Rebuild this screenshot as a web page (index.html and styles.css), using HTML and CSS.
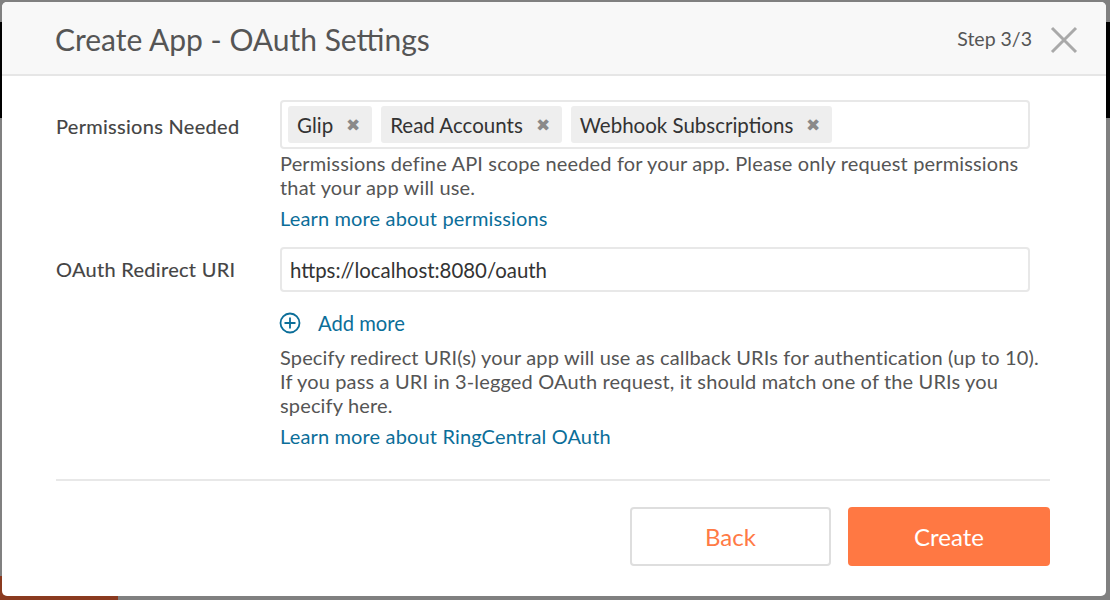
FILE: index.html
```html
<!DOCTYPE html>
<html>
<head>
<meta charset="utf-8">
<link rel="stylesheet" href="styles.css">
</head>
<body>
<div class="underlay">
  <div class="underlay-band"></div>
  <div class="underlay-spacer"></div>
  <div class="underlay-corner"></div>
</div>
<div class="modal">
  <div class="modal-header">
    <h1 class="modal-title">Create App - OAuth Settings</h1>
    <span class="step">Step 3/3</span>
    <svg class="close" width="28" height="28" viewBox="0 0 28 28"><path d="M2 2 L26 26 M26 2 L2 26" stroke="#a9a9a9" stroke-width="3" fill="none"/></svg>
  </div>
  <div class="modal-body">
    <div class="form-row">
      <label class="form-label">Permissions Needed</label>
      <div class="form-field">
        <div class="tag-input">
          <span class="tag">Glip <span class="tag-x">&#x2716;</span></span>
          <span class="tag">Read Accounts <span class="tag-x">&#x2716;</span></span>
          <span class="tag">Webhook Subscriptions <span class="tag-x">&#x2716;</span></span>
        </div>
        <p class="help">Permissions define API scope needed for your app. Please only request permissions that your app will use.</p>
        <a class="learn" href="#">Learn more about permissions</a>
      </div>
    </div>
    <div class="form-row row-uri">
      <label class="form-label label-uri">OAuth Redirect URI</label>
      <div class="form-field">
        <div class="text-input">https://localhost:8080/oauth</div>
        <div class="add-more">
          <svg width="22" height="22" viewBox="0 0 22 22"><circle cx="11" cy="11" r="9.5" stroke="#0b6e99" stroke-width="1.8" fill="none"/><path d="M11 5.5 V16.5 M5.5 11 H16.5" stroke="#0b6e99" stroke-width="1.8"/></svg>
          <span>Add more</span>
        </div>
        <p class="help help-uri">Specify redirect URI(s) your app will use as callback URIs for authentication (up to 10). If you pass a URI in 3-legged OAuth request, it should match one of the URIs you specify here.</p>
        <a class="learn" href="#">Learn more about RingCentral OAuth</a>
      </div>
    </div>
  </div>
  <div class="modal-footer">
    <button class="btn btn-back">Back</button>
    <button class="btn btn-create">Create</button>
  </div>
</div>
</body>
</html>
```
FILE: styles.css
```css
html, body {
  margin: 0;
  padding: 0;
}
body {
  width: 1110px;
  height: 600px;
  background: #808080;
  font-family: Lato, "Open Sans", sans-serif;
  overflow: hidden;
  position: relative;
}
.underlay {
  display: flex;
  flex-direction: column;
  height: 600px;
}
.underlay-band {
  margin-top: 22px;
  height: 96px;
  background: #000;
}
.underlay-spacer {
  flex: 1;
}
.underlay-corner {
  width: 118px;
  height: 24px;
  background: #8a3a1f;
}
.modal {
  position: absolute;
  left: 2px;
  top: 2px;
  width: 1104px;
  height: 594px;
  background: #fff;
  border-radius: 5px;
  overflow: hidden;
  display: flex;
  flex-direction: column;
}
.modal-header {
  height: 72px;
  background: #f8f8f8;
  border-bottom: 2px solid #e6e6e6;
  display: flex;
  align-items: center;
  padding: 0 28px 0 53px;
  flex-shrink: 0;
}
.modal-title {
  margin: 0;
  flex: 1;
  font-size: 30px;
  font-weight: normal;
  color: #555;
  padding-top: 2px;
}
.step {
  font-size: 19.5px;
  color: #555;
  margin-right: 18px;
}
.close {
  display: block;
  margin-top: 4px;
}
.modal-body {
  padding: 24px 56px 0 54px;
}
.form-row {
  display: grid;
  grid-template-columns: 224px 770px;
}
.row-uri {
  margin-top: 17px;
}
.form-label {
  font-size: 20px;
  letter-spacing: 0.3px;
  color: #444;
  line-height: 24px;
  padding-top: 14px;
  -webkit-text-stroke: 0.15px #444;
}
.label-uri {
  padding-top: 10px;
}
.tag-input {
  width: 750px;
  border: 2px solid #e8e8e8;
  border-radius: 4px;
  padding: 4px 6px;
  display: flex;
  gap: 9px;
  box-sizing: border-box;
  height: 49px;
}
.tag {
  display: flex;
  align-items: center;
  background: #eeeeee;
  border-radius: 3px;
  padding: 0 12px 0 9px;
  font-size: 20.5px;
  color: #333;
  height: 37px;
}
.tag-x {
  font-size: 17px;
  color: #8a8a8a;
  margin-left: 13px;
}
.help {
  margin: 3px 0 0;
  font-size: 20px;
  letter-spacing: 0.15px;
  line-height: 23.5px;
  color: #555;
}
.learn {
  display: block;
  margin-top: 7px;
  font-size: 20px;
  letter-spacing: 0.15px;
  line-height: 24px;
  color: #0b6e99;
  text-decoration: none;
}
.text-input {
  width: 750px;
  height: 45px;
  box-sizing: border-box;
  border: 2px solid #e8e8e8;
  border-radius: 4px;
  padding: 0 8px;
  display: flex;
  align-items: center;
  font-size: 20.4px;
  color: #333;
}
.add-more {
  margin-top: 19px;
  display: flex;
  align-items: center;
  height: 24px;
  color: #0b6e99;
  font-size: 20.2px;
}
.add-more svg {
  margin-left: -1px;
  margin-right: 17px;
}
.help-uri {
  margin-top: 10px;
  line-height: 24px;
}
.modal-footer {
  margin: 31px 56px 0 54px;
  border-top: 2px solid #e8e8e8;
  padding-top: 26px;
  display: flex;
  justify-content: flex-end;
  gap: 17px;
}
.btn {
  width: 202px;
  height: 59px;
  border-radius: 4px;
  font-family: Lato, "Open Sans", sans-serif;
  font-size: 24px;
  cursor: pointer;
}
.btn-back {
  width: 201px;
  background: #fff;
  border: 2px solid #dedede;
  color: #ff7a45;
}
.btn-create {
  background: #ff7843;
  border: none;
  color: #fff;
}
```
